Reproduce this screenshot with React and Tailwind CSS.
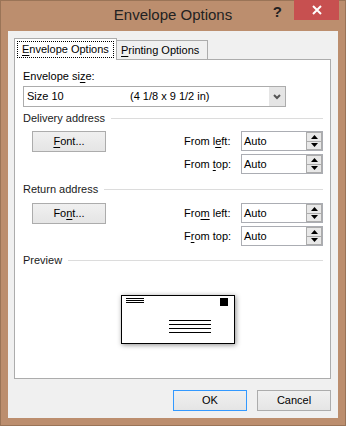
import React from "react";

const font = { fontFamily: '"Liberation Sans", Arial, sans-serif' };

const Key = ({ children }) => <span className="underline underline-offset-[2px]">{children}</span>;

const WinButton = ({ children, focused }) => (
  <div
    className={`w-[74px] h-[21px] flex items-center justify-center text-[11px] text-black bg-gradient-to-b from-[#f0f0f0] to-[#e5e5e5] border ${
      focused ? "border-[#3399ff]" : "border-[#acacac]"
    }`}
  >
    {children}
  </div>
);

const SpinBox = ({ value }) => (
  <div className="w-[82px] h-[20px] border border-[#abadb3] bg-white flex items-stretch">
    <div className="flex-1 pl-[2px] text-[11px] leading-[18px] text-black">{value}</div>
    <div className="w-[16px] flex flex-col">
      <div className="flex-1 bg-[#e8e8e8] border border-[#acacac] flex items-center justify-center">
        <svg width="7" height="4" viewBox="0 0 7 4">
          <path d="M3.5 0 L7 4 L0 4 Z" fill="#000" />
        </svg>
      </div>
      <div className="flex-1 bg-[#e8e8e8] border border-t-0 border-[#acacac] flex items-center justify-center">
        <svg width="7" height="4" viewBox="0 0 7 4">
          <path d="M0 0 L7 0 L3.5 4 Z" fill="#000" />
        </svg>
      </div>
    </div>
  </div>
);

const GroupHeading = ({ children }) => (
  <div className="flex items-center gap-[6px] h-[16px] text-[11px] leading-[16px] text-[#1a1a1a]">
    <span>{children}</span>
    <div className="flex-1 h-px bg-[#dcdcdc]" />
  </div>
);

const AddressRows = ({ fontBtn, left, top }) => (
  <div className="flex items-start">
    <div className="ml-[9px]">
      <WinButton>{fontBtn}</WinButton>
    </div>
    <div className="ml-auto flex flex-col gap-[3px]">
      <div className="flex items-center">
        <span className="w-[57px] text-[11px] text-black">{left}</span>
        <SpinBox value="Auto" />
      </div>
      <div className="flex items-center">
        <span className="w-[57px] text-[11px] text-black">{top}</span>
        <SpinBox value="Auto" />
      </div>
    </div>
  </div>
);

const EnvelopePreview = () => (
  <div className="w-[114px] h-[49px] bg-white shadow-[1px_1px_5px_rgba(0,0,0,0.45)]">
    <svg width="114" height="49" viewBox="0 0 114 49" shapeRendering="crispEdges">
      <rect x="0.5" y="0.5" width="113" height="48" fill="#fff" stroke="#000" />
      <rect x="5" y="3" width="18" height="1" fill="#000" />
      <rect x="5" y="5" width="18" height="1" fill="#000" />
      <rect x="5" y="7" width="18" height="1" fill="#000" />
      <rect x="99" y="3" width="8" height="8" fill="#000" />
      <rect x="48" y="25" width="42" height="1" fill="#000" />
      <rect x="48" y="29" width="42" height="1" fill="#000" />
      <rect x="48" y="33" width="42" height="1" fill="#000" />
      <rect x="48" y="37" width="42" height="1" fill="#000" />
    </svg>
  </div>
);

export default function App() {
  return (
    <div
      style={font}
      className="w-[346px] h-[426px] bg-[#bc8e6e] border border-[#9a7457] flex flex-col"
    >
      {/* title bar */}
      <div className="h-[30px] grid grid-cols-[1fr_auto_1fr]">
        <div />
        <div className="pt-[5px] text-[15px] leading-[18px] text-[#222]">Envelope Options</div>
        <div className="flex justify-end items-start">
          <div className="mt-[4px] mr-[12px] text-[15px] leading-[14px] font-bold text-[#222]">?</div>
          <div className="w-[45px] h-[20px] mr-[6px] -mt-px bg-[#c75050] flex items-center justify-center">
            <svg width="10" height="10" viewBox="0 0 10 10">
              <path d="M1 1 L9 9 M9 1 L1 9" stroke="#fff" strokeWidth="2" />
            </svg>
          </div>
        </div>
      </div>

      {/* client area */}
      <div className="mx-[7px] mb-[7px] flex-1 bg-[#f0f0f0] pl-[6px] pr-[7px] pt-[7px] flex flex-col">
        {/* tabs */}
        <div className="flex items-end h-[21px]">
          <div className="relative z-10 w-[103px] h-[22px] -mb-px bg-white border border-b-0 border-[#acacac] flex items-start pt-[3px] pl-[3px]">
            <span className="outline outline-1 outline-dotted outline-black px-[4px] text-[11px] leading-[15px] text-black">
              <Key>E</Key>nvelope Options
            </span>
          </div>
          <div className="w-[92px] h-[19px] -ml-px bg-[#f0f0f0] border border-b-0 border-[#acacac] text-[11px] leading-[18px] text-black pl-[4px]">
            <Key>P</Key>rinting Options
          </div>
        </div>

        {/* panel */}
        <div className="h-[320px] bg-white border border-[#acacac] pl-[8px] pr-[7px] pt-[8px] flex flex-col">
          <div className="text-[11px] leading-[16px] text-black">
            Envelope si<Key>z</Key>e:
          </div>
          <div className="mt-[2px] w-[263px] h-[21px] border border-[#acacac] flex items-stretch">
            <div className="flex-1 flex items-center text-[11px] text-black pl-[3px]">
              <span className="w-[103px]">Size 10</span>
              <span>(4 1/8 x 9 1/2 in)</span>
            </div>
            <div className="w-[16px] bg-[#e5e5e5] flex items-center justify-center">
              <svg width="8" height="6" viewBox="0 0 8 6">
                <path d="M1 1 L4 4 L7 1" stroke="#555" strokeWidth="2" fill="none" />
              </svg>
            </div>
          </div>

          <div className="mt-[3px]">
            <GroupHeading>Delivery address</GroupHeading>
          </div>
          <div className="mt-[5px]">
            <AddressRows
              fontBtn={<><Key>F</Key>ont...</>}
              left={<>From l<Key>e</Key>ft:</>}
              top={<>From <Key>t</Key>op:</>}
            />
          </div>

          <div className="mt-[7px]">
            <GroupHeading>Return address</GroupHeading>
          </div>
          <div className="mt-[6px]">
            <AddressRows
              fontBtn={<>Fo<Key>n</Key>t...</>}
              left={<>Fro<Key>m</Key> left:</>}
              top={<>F<Key>r</Key>om top:</>}
            />
          </div>

          <div className="mt-[6px]">
            <GroupHeading>Preview</GroupHeading>
          </div>
          <div className="mt-[27px] ml-[98px]">
            <EnvelopePreview />
          </div>
        </div>

        {/* buttons */}
        <div className="mt-[11px] flex justify-end gap-[10px]">
          <WinButton focused>OK</WinButton>
          <WinButton>Cancel</WinButton>
        </div>
      </div>
    </div>
  );
}
